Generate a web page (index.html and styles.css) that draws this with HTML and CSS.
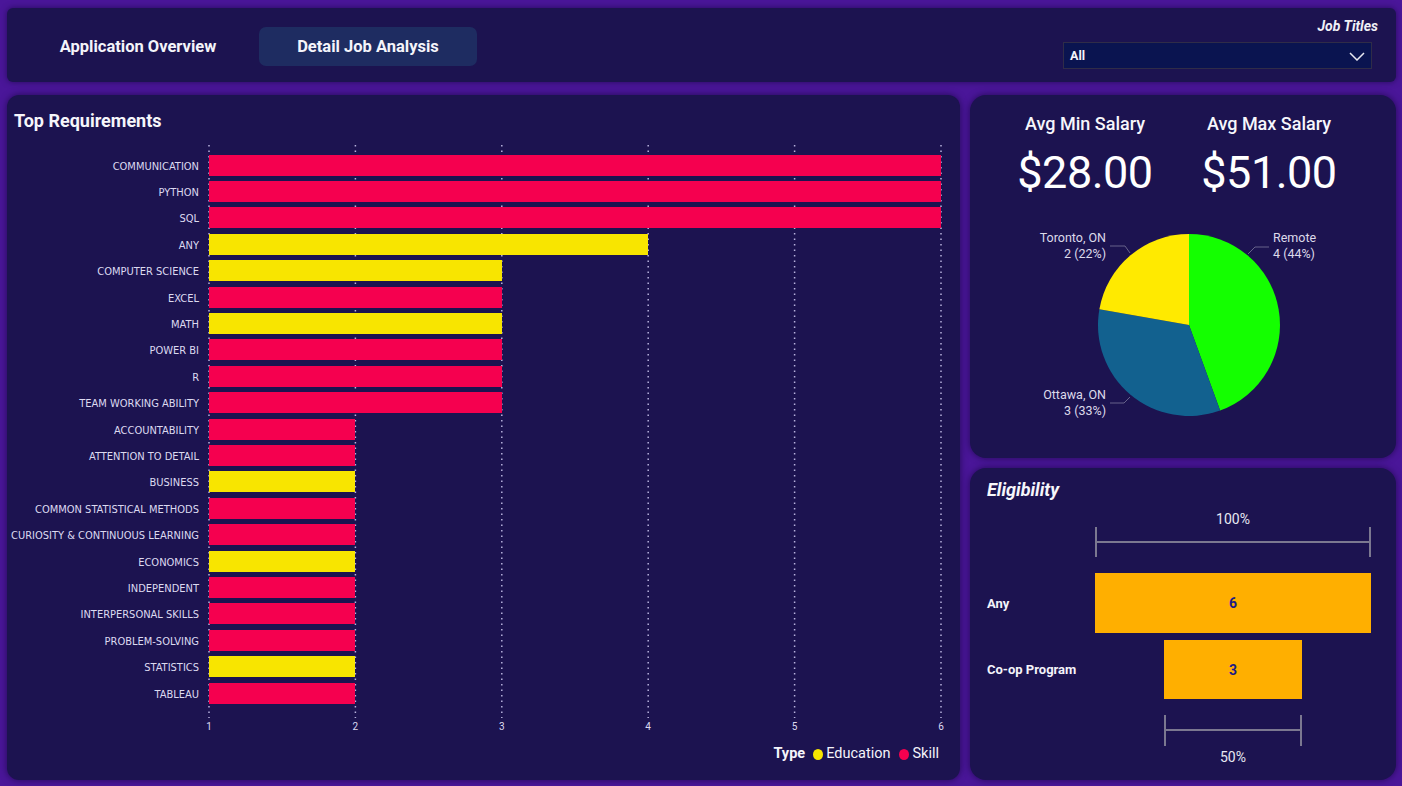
FILE: index.html
```html
<!DOCTYPE html>
<html>
<head>
<meta charset="utf-8">
<link rel="stylesheet" href="styles.css">
</head>
<body>
<div class="page">
  <header class="topbar">
    <nav class="tabs">
      <div class="tab">Application Overview</div>
      <div class="tab active">Detail Job Analysis</div>
    </nav>
    <div class="slicer">
      <div class="slicer-label">Job Titles</div>
      <div class="dropdown">
        <span>All</span>
        <svg class="chev" width="16" height="9" viewBox="0 0 16 9"><polyline points="1,1 8,8 15,1" fill="none" stroke="#e8e8f0" stroke-width="1.5"/></svg>
      </div>
    </div>
  </header>

  <main class="main">
    <section class="panel req">
      <h2 class="req-title">Top Requirements</h2>
      <div class="plot">
        <svg class="grid" preserveAspectRatio="none">
          <line x1="1" y1="0" x2="1" y2="100%"/>
          <line x1="147.4" y1="0" x2="147.4" y2="100%"/>
          <line x1="293.8" y1="0" x2="293.8" y2="100%"/>
          <line x1="440.2" y1="0" x2="440.2" y2="100%"/>
          <line x1="586.6" y1="0" x2="586.6" y2="100%"/>
          <line x1="733" y1="0" x2="733" y2="100%"/>
        </svg>
        <div class="row"><span class="lbl">COMMUNICATION</span><div class="bar skill" style="width:732px"></div></div>
        <div class="row"><span class="lbl">PYTHON</span><div class="bar skill" style="width:732px"></div></div>
        <div class="row"><span class="lbl">SQL</span><div class="bar skill" style="width:732px"></div></div>
        <div class="row"><span class="lbl">ANY</span><div class="bar edu" style="width:439px"></div></div>
        <div class="row"><span class="lbl">COMPUTER SCIENCE</span><div class="bar edu" style="width:293px"></div></div>
        <div class="row"><span class="lbl">EXCEL</span><div class="bar skill" style="width:293px"></div></div>
        <div class="row"><span class="lbl">MATH</span><div class="bar edu" style="width:293px"></div></div>
        <div class="row"><span class="lbl">POWER BI</span><div class="bar skill" style="width:293px"></div></div>
        <div class="row"><span class="lbl">R</span><div class="bar skill" style="width:293px"></div></div>
        <div class="row"><span class="lbl">TEAM WORKING ABILITY</span><div class="bar skill" style="width:293px"></div></div>
        <div class="row"><span class="lbl">ACCOUNTABILITY</span><div class="bar skill" style="width:146px"></div></div>
        <div class="row"><span class="lbl">ATTENTION TO DETAIL</span><div class="bar skill" style="width:146px"></div></div>
        <div class="row"><span class="lbl">BUSINESS</span><div class="bar edu" style="width:146px"></div></div>
        <div class="row"><span class="lbl">COMMON STATISTICAL METHODS</span><div class="bar skill" style="width:146px"></div></div>
        <div class="row"><span class="lbl">CURIOSITY &amp; CONTINUOUS LEARNING</span><div class="bar skill" style="width:146px"></div></div>
        <div class="row"><span class="lbl">ECONOMICS</span><div class="bar edu" style="width:146px"></div></div>
        <div class="row"><span class="lbl">INDEPENDENT</span><div class="bar skill" style="width:146px"></div></div>
        <div class="row"><span class="lbl">INTERPERSONAL SKILLS</span><div class="bar skill" style="width:146px"></div></div>
        <div class="row"><span class="lbl">PROBLEM-SOLVING</span><div class="bar skill" style="width:146px"></div></div>
        <div class="row"><span class="lbl">STATISTICS</span><div class="bar edu" style="width:146px"></div></div>
        <div class="row"><span class="lbl">TABLEAU</span><div class="bar skill" style="width:146px"></div></div>
      </div>
      <div class="axis"><span>1</span><span>2</span><span>3</span><span>4</span><span>5</span><span>6</span></div>
      <div class="legend">
        <span class="legend-title">Type</span>
        <span class="dot edu-dot"></span><span>Education</span>
        <span class="dot skill-dot"></span><span>Skill</span>
      </div>
    </section>

    <div class="side">
      <section class="panel salary">
        <div class="kpis">
          <div class="kpi"><div class="kpi-title">Avg Min Salary</div><div class="kpi-val">$28.00</div></div>
          <div class="kpi"><div class="kpi-title">Avg Max Salary</div><div class="kpi-val">$51.00</div></div>
        </div>
        <svg class="pie" width="426" height="240" viewBox="0 0 426 240">
          <path d="M219,120 L219,29 A91,91 0 0 1 250.12,205.51 Z" fill="#14ff00"/>
          <path d="M219,120 L250.12,205.51 A91,91 0 0 1 129.38,104.20 Z" fill="#12618f"/>
          <path d="M219,120 L129.38,104.20 A91,91 0 0 1 219,29 Z" fill="#ffea00"/>
          <polyline class="leader" points="140,41 155,41 160,48"/>
          <polyline class="leader" points="278,49 285,42 299,42"/>
          <polyline class="leader" points="140,198 154,198 160,192"/>
          <text class="pl" x="136" y="37" text-anchor="end">Toronto, ON</text>
          <text class="pl" x="136" y="53" text-anchor="end">2 (22%)</text>
          <text class="pl" x="303" y="37">Remote</text>
          <text class="pl" x="303" y="53">4 (44%)</text>
          <text class="pl" x="136" y="194" text-anchor="end">Ottawa, ON</text>
          <text class="pl" x="136" y="210" text-anchor="end">3 (33%)</text>
        </svg>
      </section>

      <section class="panel elig">
        <h2 class="elig-title">Eligibility</h2>
        <div class="frow"><span class="flbl"></span><div class="track"><div class="pct">100%</div></div></div>
        <div class="frow"><span class="flbl"></span><div class="track"><div class="bracket full"></div></div></div>
        <div class="frow bar-row first"><span class="flbl">Any</span><div class="track"><div class="fbar full">6</div></div></div>
        <div class="frow bar-row second"><span class="flbl">Co-op Program</span><div class="track"><div class="fbar half">3</div></div></div>
        <div class="frow"><span class="flbl"></span><div class="track"><div class="bracket half low"></div></div></div>
        <div class="frow"><span class="flbl"></span><div class="track"><div class="pct low-pct">50%</div></div></div>
      </section>
    </div>
  </main>
</div>
</body>
</html>
```

FILE: styles.css
```css
* { box-sizing: border-box; }
html, body {
  margin: 0;
  padding: 0;
  background: #4a1699;
  width: 1402px;
  height: 786px;
  overflow: hidden;
  font-family: Roboto, "Liberation Sans", sans-serif;
  color: #ffffff;
}
.page {
  padding: 8px 6px 6px 7px;
  display: flex;
  flex-direction: column;
  gap: 13px;
  height: 786px;
}
.topbar {
  height: 74px;
  background: #1c1350;
  border-radius: 6px;
  box-shadow: 0 0 6px rgba(10, 0, 40, 0.55);
  display: flex;
  justify-content: space-between;
  padding: 0 18px 0 22px;
}
.tabs {
  display: flex;
  gap: 12px;
  align-items: center;
}
.tab {
  width: 218px;
  height: 39px;
  border-radius: 7px;
  display: flex;
  align-items: center;
  justify-content: center;
  font-size: 16.5px;
  font-weight: 700;
  color: #f4f4fa;
  margin-top: 3px;
}
.tab.active { background: #1e2c61; }
.slicer {
  padding-top: 10px;
  width: 315px;
  display: flex;
  flex-direction: column;
  align-items: flex-start;
}
.slicer-label {
  align-self: flex-end;
  font-size: 14px;
  font-style: italic;
  font-weight: 700;
  line-height: 16px;
  color: #f0f0f6;
}
.dropdown {
  margin-top: 8px;
  width: 309px;
  height: 27px;
  background: #0a1450;
  border: 1px solid #2f2c48;
  display: flex;
  align-items: center;
  justify-content: space-between;
  padding: 0 6px 0 6px;
  font-size: 12.5px;
  font-weight: 700;
  color: #f4f4fa;
}
.chev { margin-top: 1px; }

.main {
  flex: 1;
  display: flex;
  gap: 10px;
}
.panel {
  background: #1c1350;
  box-shadow: 0 0 7px rgba(10, 0, 40, 0.6);
}
.req {
  width: 953px;
  height: 685px;
  border-radius: 12px;
  padding-top: 16px;
}
.req-title {
  margin: 0 0 14px 7px;
  font-size: 18px;
  line-height: 20px;
  font-weight: 700;
  color: #f6f6fb;
}
.plot {
  position: relative;
  padding: 7px 0 12px;
}
.grid {
  position: absolute;
  left: 201px;
  top: 0;
  width: 735px;
  height: 100%;
  z-index: 0;
}
.grid line {
  stroke: #b7b2dc;
  stroke-width: 1.5;
  stroke-dasharray: 1.5 4;
}
.row {
  position: relative;
  z-index: 1;
  display: grid;
  grid-template-columns: 192px 732px;
  column-gap: 10px;
  height: 26.4px;
  align-items: center;
}
.lbl {
  text-align: right;
  font-family: "Liberation Sans Narrow", "DejaVu Sans Condensed", Roboto, sans-serif;
  font-size: 11px;
  line-height: 13px;
  padding-top: 2px;
  color: #dcdaf0;
  white-space: nowrap;
}
.bar { height: 21px; }
.skill { background: #f5004f; }
.edu { background: #f8e500; }
.axis {
  margin: 2px 0 0 197px;
  width: 742px;
  display: flex;
  justify-content: space-between;
  font-size: 10px;
  line-height: 14px;
  color: #dcdaf0;
}
.axis span { width: 10px; text-align: center; }
.legend {
  margin-top: 11px;
  padding-right: 21px;
  display: flex;
  justify-content: flex-end;
  align-items: center;
  font-size: 14.5px;
  line-height: 18px;
  color: #f4f4fa;
}
.legend-title { font-weight: 700; margin-right: 8px; }
.dot {
  width: 10px;
  height: 11px;
  border-radius: 50%;
  margin-right: 3px;
}
.edu-dot { background: #f8e500; }
.skill-dot { background: #f5004f; margin-left: 9px; }

.side {
  width: 426px;
  display: flex;
  flex-direction: column;
  gap: 10px;
}
.salary {
  height: 363px;
  border-radius: 16px;
  padding-top: 19px;
}
.kpis {
  display: grid;
  grid-template-columns: 184px 184px;
  padding-left: 23px;
}
.kpi { text-align: center; }
.kpi-title {
  font-size: 18px;
  line-height: 20px;
  font-weight: 500;
  color: #f6f6fb;
}
.kpi-val {
  margin-top: 14px;
  font-size: 45px;
  line-height: 50px;
  letter-spacing: -0.5px;
  color: #ffffff;
}
.pie {
  display: block;
  margin-top: 7px;
}
.leader {
  fill: none;
  stroke: #67638a;
  stroke-width: 1;
}
.pl {
  font-family: Roboto, sans-serif;
  font-size: 12.5px;
  fill: #dcdaea;
}

.elig {
  flex: 1;
  border-radius: 16px;
  padding: 12px 0 0 17px;
}
.elig-title {
  margin: 0;
  font-size: 18px;
  line-height: 20px;
  font-style: italic;
  font-weight: 700;
  color: #f6f6fb;
}
.frow {
  display: flex;
  align-items: center;
}
.flbl {
  width: 108px;
  font-size: 13px;
  font-weight: 700;
  color: #f4f4fa;
}
.track {
  width: 276px;
  display: flex;
  justify-content: center;
}
.pct {
  margin-top: 11px;
  font-size: 14px;
  line-height: 16px;
  color: #e8e8f2;
}
.pct.low-pct { margin-top: 3px; }
.bracket {
  position: relative;
  height: 30px;
  border-left: 2px solid #7b7890;
  border-right: 2px solid #7b7890;
}
.bracket::after {
  content: "";
  position: absolute;
  left: 0;
  right: 0;
  top: 14px;
  height: 2px;
  background: #7b7890;
}
.bracket.low { margin-top: 16px; height: 31px; }
.full { width: 276px; }
.half { width: 138px; }
.bar-row.first { margin-top: 16px; }
.bar-row.second { margin-top: 7px; }
.fbar {
  height: 60px;
  background: #ffaf00;
  display: flex;
  align-items: center;
  justify-content: center;
  font-size: 14px;
  font-weight: 700;
  color: #1d1b86;
}
.bar-row.second .fbar { height: 59px; }
```
